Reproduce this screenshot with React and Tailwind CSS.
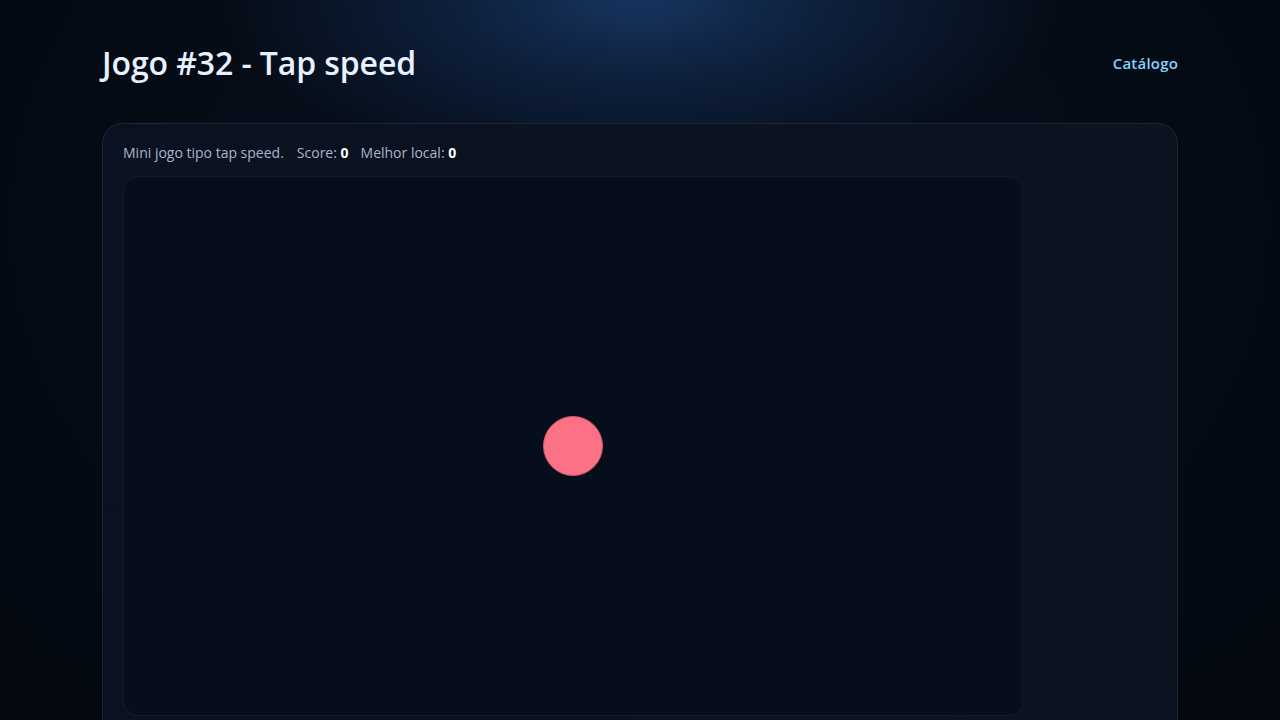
const TapSpeedPage = () => {
  const score = 0;
  const best = 0;

  return (
    <main
      className="min-h-screen bg-[#040a13] bg-[radial-gradient(ellipse_420px_180px_at_50%_0%,#17345e_0%,#0d1f3b_45%,transparent_100%),radial-gradient(ellipse_900px_700px_at_50%_30%,#07111f_0%,#040a13_70%,#020710_100%)] text-[#e6f0ff]"
      style={{ fontFamily: '"Trebuchet MS", "Open Sans", "Noto Sans", sans-serif' }}
    >
      <div className="mx-auto w-[1076px] pt-[41px]">
        <header className="flex items-center justify-between h-[44px]">
          <h1 className="text-[32px] font-semibold leading-none tracking-[-0.1px] text-[#e8f1ff]">
            Jogo #32 - Tap speed
          </h1>
          <a href="#" className="text-[15px] font-semibold tracking-[0.2px] text-[#86d2fc]">
            Catálogo
          </a>
        </header>

        <section className="mt-[38px] rounded-[20px] border border-[#1c2638] bg-gradient-to-r from-[#0a1120] to-[#0c1220] px-[20px] pt-[19px] pb-[20px]">
          <p className="text-[14px] leading-[20px] text-[#a9b6c8]">
            Mini jogo tipo tap speed.
            <span className="ml-[13px]">
              Score: <b className="font-bold text-white">{score}</b>
            </span>
            <span className="ml-[12px]">
              Melhor local: <b className="font-bold text-white">{best}</b>
            </span>
          </p>

          <div className="mt-[13px] w-[900px] h-[540px] rounded-[14px] border border-[#141c2b] bg-[#070e1b] flex items-center justify-center">
            <button
              aria-label="tap"
              className="w-[60px] h-[60px] rounded-full bg-[#fb7185] border border-[#d9576b]"
            />
          </div>
        </section>
      </div>
    </main>
  );
};

export default function App() {
  return <TapSpeedPage />;
}
